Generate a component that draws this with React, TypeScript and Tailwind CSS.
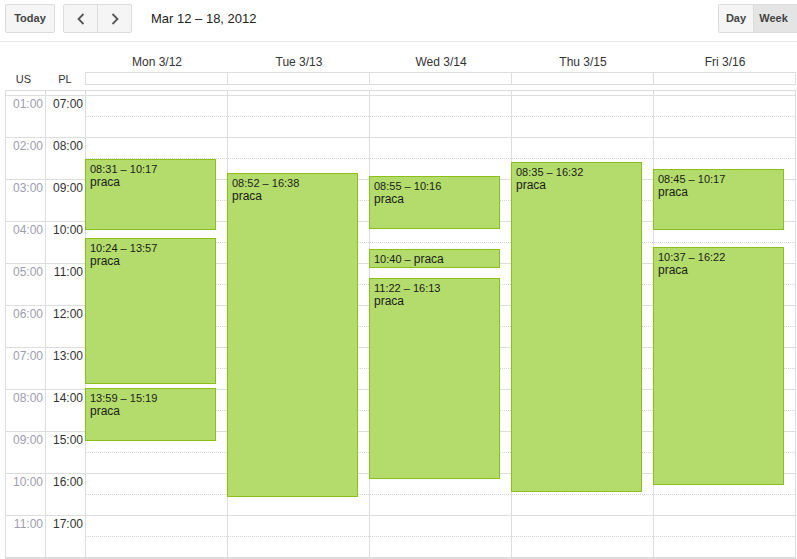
import React from 'react'

type Ev = { start: string; end: string; label?: string; short?: boolean }

const days = ['Mon 3/12', 'Tue 3/13', 'Wed 3/14', 'Thu 3/15', 'Fri 3/16']
const us = ['01:00', '02:00', '03:00', '04:00', '05:00', '06:00', '07:00', '08:00', '09:00', '10:00', '11:00']
const pl = ['07:00', '08:00', '09:00', '10:00', '11:00', '12:00', '13:00', '14:00', '15:00', '16:00', '17:00']

const events: Ev[][] = [
  [
    { start: '08:31', end: '10:17' },
    { start: '10:24', end: '13:57' },
    { start: '13:59', end: '15:19' },
  ],
  [{ start: '08:52', end: '16:38' }],
  [
    { start: '08:55', end: '10:16' },
    { start: '10:40', end: '11:11', short: true },
    { start: '11:22', end: '16:13' },
  ],
  [{ start: '08:35', end: '16:32' }],
  [
    { start: '08:45', end: '10:17' },
    { start: '10:37', end: '16:22' },
  ],
]

const mins = (t: string) => {
  const [h, m] = t.split(':').map(Number)
  return h * 60 + m
}

const Chevron = ({ dir }: { dir: 'l' | 'r' }) => (
  <svg width="8" height="12" viewBox="0 0 8 12" fill="none">
    <path
      d={dir === 'l' ? 'M6.5 1 L1.5 6 L6.5 11' : 'M1.5 1 L6.5 6 L1.5 11'}
      stroke="#555"
      strokeWidth="1.8"
    />
  </svg>
)

const Event = ({ ev }: { ev: Ev }) => {
  const s = mins(ev.start) - 420
  const d = mins(ev.end) - mins(ev.start)
  return (
    <div
      className="absolute -left-px w-[131px] bg-[#b3dc6c] border border-[#8cbf1a] pl-[4px] pt-[3px] text-[#1b1b1b] overflow-hidden"
      style={{ top: 4 + s * 0.7, height: d * 0.7 - 3 }}
    >
      {ev.short ? (
        <div className="text-[11px] leading-[12px]">
          {ev.start} – <span className="text-[12px]">praca</span>
        </div>
      ) : (
        <>
          <div className="text-[11px] leading-[12px]">
            {ev.start} – {ev.end}
          </div>
          <div className="text-[12px] leading-[14px]">praca</div>
        </>
      )}
    </div>
  )
}

export default function App() {
  return (
    <div
      className="w-[797px] h-[559px] bg-white overflow-hidden text-[#333]"
      style={{ fontFamily: '"Liberation Sans", Arial, sans-serif' }}
    >
      {/* toolbar */}
      <div className="h-[42px] border-b border-[#ebebeb] flex items-start pt-[4px] pl-[5px]">
        <button className="h-[29px] w-[50px] rounded-[2px] border border-[#dcdcdc] bg-[#f5f5f5] text-[11px] font-bold text-[#444]">
          Today
        </button>
        <div className="ml-[8px] flex h-[29px] rounded-[2px] border border-[#dcdcdc] bg-[#f5f5f5]">
          <div className="w-[34px] flex items-center justify-center border-r border-[#dcdcdc]">
            <Chevron dir="l" />
          </div>
          <div className="w-[33px] flex items-center justify-center">
            <Chevron dir="r" />
          </div>
        </div>
        <div className="ml-[19px] pt-[6px] text-[13px] leading-[18px] text-[#222]">Mar 12 – 18, 2012</div>
        <div className="ml-auto flex h-[29px] rounded-l-[2px] border border-r-0 border-[#dcdcdc] text-[11px] font-bold text-[#444]">
          <div className="w-[35px] flex items-center justify-center bg-[#f5f5f5] border-r border-[#dcdcdc]">Day</div>
          <div className="w-[43px] flex items-center justify-center bg-[#e4e4e4] pr-[4px]">Week</div>
        </div>
      </div>

      {/* day names */}
      <div className="flex h-[30px] pt-[13px]">
        <div className="w-[86px]" />
        {days.map((d) => (
          <div key={d} className="w-[142px] text-center text-[12px] leading-[14px] text-[#333]">
            {d}
          </div>
        ))}
      </div>

      {/* all-day row */}
      <div className="flex h-[13px] items-center">
        <div className="w-[45px] text-center text-[11px] leading-[13px] text-[#333] pl-[2px] pt-[2px]">US</div>
        <div className="w-[40px] text-center text-[11px] leading-[13px] text-[#333] pt-[2px]">PL</div>
        <div className="flex h-[13px] border border-[#dddddd] border-r-0">
          {days.map((d) => (
            <div key={d} className="w-[142px] border-r border-[#dddddd]" />
          ))}
        </div>
      </div>

      {/* grid */}
      <div className="mt-[5px] ml-[5px] flex w-[791px] border-t border-l border-b border-[#dddddd]">
        <div className="w-[40px] border-r border-[#dddddd]">
          <div className="h-[5px] border-b border-[#dddddd]" />
          {us.map((t) => (
            <div key={t} className="h-[42px] border-b border-[#dddddd] text-right pr-[2px] pt-[1px] text-[12px] leading-[14px] text-[#9d9dad]">
              {t}
            </div>
          ))}
        </div>
        <div className="w-[40px] border-r border-[#dddddd]">
          <div className="h-[5px] border-b border-[#dddddd]" />
          {pl.map((t) => (
            <div key={t} className="h-[42px] border-b border-[#dddddd] text-right pr-[2px] pt-[1px] text-[12px] leading-[14px] text-[#333]">
              {t}
            </div>
          ))}
        </div>
        {days.map((d, i) => (
          <div key={d} className="relative w-[142px] border-r border-[#dddddd]">
            <div className="h-[5px] border-b border-[#dddddd]" />
            {pl.map((t) => (
              <div key={t} className="h-[42px] border-b border-[#dddddd]">
                <div className="h-[21px] border-b border-dotted border-[#d6d6d6]" />
              </div>
            ))}
            {events[i].map((ev) => (
              <Event key={ev.start} ev={ev} />
            ))}
          </div>
        ))}
      </div>
    </div>
  )
}
